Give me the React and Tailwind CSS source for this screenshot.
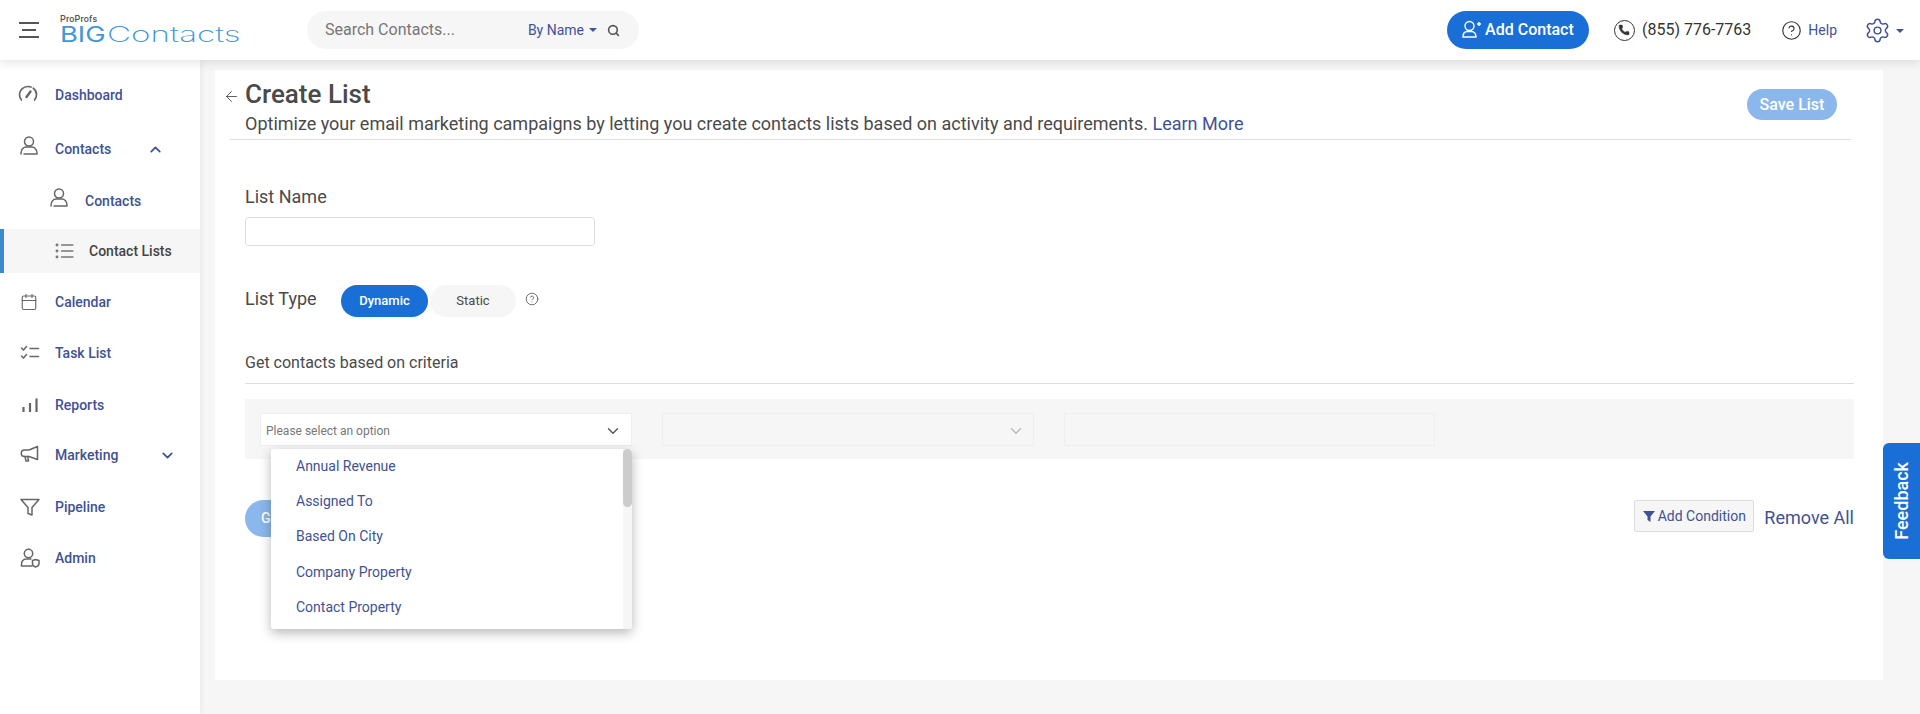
import React from "react";
import { ChevronUp, ChevronDown, Search, Calendar, Settings, Phone, CircleHelp, ArrowLeft } from "lucide-react";

const Svg = ({ children, className = "w-5 h-5 text-[#666]", sw = 1.5, vb = "0 0 20 20" }) => (
  <svg viewBox={vb} fill="none" stroke="currentColor" strokeWidth={sw} strokeLinecap="round" strokeLinejoin="round" className={className}>
    {children}
  </svg>
);

const UserIcon = () => (
  <Svg className="w-[18px] h-[19px] text-[#666] -mt-[7px]" vb="0 0 18 19">
    <circle cx="9" cy="5.500" r="4.500" />
    <path d="M1 18v-1c0-3.500 2.500-6 5-6h6c2.500 0 5 2.500 5 6v1H4" />
  </Svg>
);
const GaugeIcon = () => (
  <Svg className="w-[20px] h-[20px] text-[#666] -ml-[2px] -mt-[2px]" sw={1.7}>
    <path d="M3.500 16C2 14.500 1.500 12.500 1.500 10.500 1.500 6 5.300 2.500 10 2.500s8.500 3.500 8.500 8c0 2-.7 4-2 5.500" strokeDasharray="22 2.500" />
    <path d="M8.500 13l4-5.500" strokeWidth="2.400" />
  </Svg>
);
const ListIcon = () => (
  <Svg className="w-5 h-5 text-[#777] -ml-[1px]" sw={1.3}>
    <circle cx="3" cy="4" r=".8" fill="currentColor" />
    <circle cx="3" cy="10" r=".8" fill="currentColor" />
    <circle cx="3" cy="16" r=".8" fill="currentColor" />
    <path d="M7.500 4H19M7.500 10H19M7.500 16H19" />
  </Svg>
);
const TasksIcon = () => (
  <Svg>
    <path d="M1.500 5l2 2 3-3.500M1.500 13l2 2 3-3.500" />
    <path d="M10 5.500h8.500M10 13.500h8.500" />
  </Svg>
);
const BarsIcon = () => (
  <Svg sw={2.200}>
    <path d="M3.500 17v-5M10 17V8M16.500 17V3.500" strokeLinecap="butt" />
  </Svg>
);
const MegaIcon = () => (
  <Svg className="w-5 h-5 text-[#666] -mt-[3px]">
    <path d="M17.500 2.500v13L9 12.500H4.500a3 3 0 0 1 0-6.500H9z" />
    <path d="M5 12.500l1 4.500h2.500l-.8-4.500" />
  </Svg>
);
const FunnelIcon = () => (
  <Svg>
    <path d="M1 2.500h18l-7 8V18l-4-1.500v-6z" />
  </Svg>
);
const AdminIcon = () => (
  <Svg>
    <circle cx="8.500" cy="5.500" r="4.200" />
    <path d="M1.500 18v-2c0-2.500 2-5 4.500-5h5M1.500 18H12" />
    <path d="M12.500 12.500l3-1 3.500 1v3c0 2-1.500 3-3.500 3.500-1.700-.5-3-1.500-3-3.500z" />
  </Svg>
);

const Caret = ({ className = "" }) => (
  <span className={`inline-block w-0 h-0 border-x-[4px] border-x-transparent border-t-[4px] border-t-[#3f5293] ${className}`} />
);

const Item = ({ icon, label, trailing, className = "" }) => (
  <div className={`flex items-center h-[26px] pl-5 text-[14px] font-medium text-[#3f5293] ${className}`}>
    <span className="w-[35px] shrink-0">{icon}</span>
    <span>{label}</span>
    {trailing}
  </div>
);

export default function App() {
  const options = ["Annual Revenue", "Assigned To", "Based On City", "Company Property", "Contact Property"];
  return (
    <div className="relative h-[714px] w-[1920px] overflow-hidden flex flex-col bg-[#f6f6f6] font-['Roboto',sans-serif] text-[#4a4a4a]">
      <header className="relative z-10 h-[60px] shrink-0 bg-white shadow-[0_2px_10px_rgba(0,0,0,0.12)] flex items-center pl-[19px] pr-4">
        <div className="flex flex-col gap-[5px] w-[20px]">
          <span className="h-[2px] w-[20px] bg-[#555]" />
          <span className="h-[2px] w-[14px] ml-[3px] bg-[#555]" />
          <span className="h-[2px] w-[20px] bg-[#555]" />
        </div>
        <div className="ml-[21px] w-[180px] h-[32px] flex flex-col justify-center mt-[-1px]">
          <span className="text-[9px] leading-[9px] text-[#555] tracking-[0.2px] font-medium">ProProfs</span>
          <span className="flex items-baseline text-[21px] leading-[21px] text-[#3f97d8] font-['Inter',sans-serif] whitespace-nowrap">
            <span className="font-normal origin-left scale-x-[1.3] w-[47px]">BIG</span>
            <span className="font-extralight origin-left scale-x-[1.58]">Contacts</span>
          </span>
        </div>
        <div className="ml-[67px] w-[332px] h-[38px] rounded-full bg-[#f6f6f6] flex items-center pl-[18px] pr-[19px]">
          <span className="text-[16px] text-[#777] flex-1">Search Contacts...</span>
          <span className="text-[14px] text-[#3f5293]">By Name</span>
          <Caret className="ml-[5px]" />
          <Search size={13} strokeWidth={3} className="ml-[10px] text-[#555]" />
        </div>
        <div className="flex-1" />
        <button className="w-[142px] h-[38px] rounded-full bg-[#1a6fd6] text-white text-[16px] font-medium flex items-center justify-center gap-[3px]">
          <svg viewBox="0 0 20 18" fill="none" stroke="currentColor" strokeWidth="1.400" className="w-[20px] h-[18px] mb-[3px]">
            <circle cx="7.500" cy="6" r="4.500" />
            <path d="M1 17c0-3.500 2-5.500 4.500-5.500h4c2.500 0 4.500 2 4.500 5.500zM15 4h4M17 2v4" />
          </svg>
          Add Contact
        </button>
        <span className="ml-[25px] w-[21px] h-[21px] rounded-full border border-[#333] flex items-center justify-center">
          <Phone size={12} fill="#333" strokeWidth={1} className="text-[#333]" />
        </span>
        <span className="ml-[7px] text-[16px] text-[#333]">(855) 776-7763</span>
        <CircleHelp size={21} strokeWidth={1.300} className="ml-[30px] text-[#333]" />
        <span className="ml-[6px] text-[14px] text-[#3f5293]">Help</span>
        <Settings size={27} strokeWidth={1.300} className="ml-[27px] text-[#3f5293]" />
        <Caret className="ml-[5px] mt-[2px]" />
      </header>

      <div className="flex-1 flex min-h-0">
        <aside className="relative z-[5] w-[200px] shrink-0 bg-white shadow-[2px_0_6px_rgba(0,0,0,0.05)] pt-[22px] flex flex-col">
          <Item icon={<GaugeIcon />} label="Dashboard" />
          <Item
            className="mt-[28px]"
            icon={<UserIcon />}
            label="Contacts"
            trailing={<ChevronUp size={17} strokeWidth={2.500} className="ml-[36px]" />}
          />
          <Item className="mt-[26px] pl-[50px]" icon={<UserIcon />} label="Contacts" />
          <div className="mt-[15px] h-[44px] bg-[#f6f6f6] border-l-[4px] border-[#3b8ad0] flex items-center pl-[51px] text-[14px] font-medium text-[#444]">
            <span className="w-[34px] shrink-0"><ListIcon /></span>
            Contact Lists
          </div>
          <Item className="mt-[16px]" icon={<Calendar size={18} strokeWidth={1.500} className="text-[#666]" />} label="Calendar" />
          <Item className="mt-[25px]" icon={<TasksIcon />} label="Task List" />
          <Item className="mt-[26px]" icon={<BarsIcon />} label="Reports" />
          <Item
            className="mt-[24px]"
            icon={<MegaIcon />}
            label="Marketing"
            trailing={<ChevronDown size={17} strokeWidth={2.500} className="ml-[41px]" />}
          />
          <Item className="mt-[26px]" icon={<FunnelIcon />} label="Pipeline" />
          <Item className="mt-[25px]" icon={<AdminIcon />} label="Admin" />
        </aside>

        <div className="flex-1 min-w-0 pt-[10px] pb-[34px] pl-[15px] pr-[37px]">
          <main className="relative h-full bg-white pl-[15px] pr-[32px]">
            <div className="border-b border-[#ddd] h-[70px] flex relative">
              <ArrowLeft size={17} strokeWidth={1.200} className="mt-[18px] -ml-[7px] text-[#444]" />
              <div className="ml-[5px] flex-1">
                <h1 className="text-[26px] leading-[28px] mt-[10px] font-medium">Create List</h1>
                <p className="text-[18px] leading-[22px] mt-[5px] whitespace-nowrap">
                  Optimize your email marketing campaigns by letting you create contacts lists based on activity and requirements.{" "}
                  <span className="text-[#3f5293]">Learn More</span>
                </p>
              </div>
              <button className="absolute right-[14px] top-[19px] w-[90px] h-[31px] rounded-full bg-[#8bb7ec] text-white text-[16px] font-medium">Save List</button>
            </div>

            <div className="pl-[15px] -mr-[3px]">
              <label className="block mt-[46px] text-[18px] leading-[22px]">List Name</label>
              <div className="mt-[9px] w-[350px] h-[29px] border border-[#ddd] rounded-[4px] bg-white" />

              <div className="mt-[39px] flex items-center h-[32px]">
                <span className="text-[18px] w-[96px] -mt-[6px]">List Type</span>
                <span className="w-[87px] h-[32px] rounded-full bg-[#1a6fd6] text-white text-[13px] font-medium flex items-center justify-center">Dynamic</span>
                <span className="ml-[2px] w-[86px] h-[32px] rounded-full bg-[#f6f6f6] text-[13px] flex items-center justify-center">Static</span>
                <CircleHelp size={14} strokeWidth={1.400} className="ml-[9px] -mt-[4px] text-[#555]" />
              </div>

              <div className="mt-[35px] h-[32px] border-b border-[#ddd] text-[16px] leading-[20px] pt-[1px]">Get contacts based on criteria</div>

              <div className="relative mt-[15px] h-[60px] bg-[#f6f6f6] pl-[15px] pt-[14px] flex gap-[30px]">
                <div className="w-[372px] h-[33px] bg-white border border-[#eee] flex items-center justify-between pl-[5px] pr-[9px] pt-[2px]">
                  <span className="text-[12px] text-[#777]">Please select an option</span>
                  <ChevronDown size={18} strokeWidth={1.800} className="text-[#555]" />
                </div>
                <div className="w-[372px] h-[33px] border border-[#eee] flex items-center justify-end pr-[8px] pt-[2px]">
                  <ChevronDown size={18} strokeWidth={1.800} className="text-[#bbb]" />
                </div>
                <div className="w-[371px] h-[33px] border border-[#eee]" />
                <div className="absolute z-20 left-[26px] top-[50px] w-[361px] h-[180px] bg-white rounded-[3px] shadow-[0_4px_12px_rgba(0,0,0,0.28)] overflow-hidden flex">
                  <ul className="flex-1 pl-[25px]">
                    {options.map((o) => (
                      <li key={o} className="h-[35.200px] flex items-center text-[14px] text-[#3f5293]">{o}</li>
                    ))}
                  </ul>
                  <div className="w-[9px] bg-[#f6f6f6]">
                    <div className="h-[58px] rounded-full bg-[#ccc]" />
                  </div>
                </div>
              </div>

              <div className="mt-[41px] flex items-start justify-between">
                <button className="w-[90px] h-[37px] rounded-full bg-[#8bb7ec] text-white text-[14px] font-medium text-left pl-[16px]">Get Count</button>
                <div className="flex items-center">
                  <button className="w-[120px] h-[32px] bg-[#f6f6f6] border border-[#ddd] rounded-[2px] text-[14px] text-[#3f5293] flex items-center justify-center gap-[3px]">
                    <svg viewBox="0 0 12 12" className="w-[12px] h-[12px]" fill="#3f5293"><path d="M0 1h12L7.500 6.500V12l-3-2V6.500z" /></svg>
                    Add Condition
                  </button>
                  <span className="ml-[10px] text-[18px] text-[#3f5293] mt-[2px]">Remove All</span>
                </div>
              </div>
            </div>
          </main>
        </div>
      </div>

      <div className="absolute z-30 right-0 top-[443px] w-[37px] h-[116px] bg-[#1a6fd6] rounded-l-[6px] flex items-center justify-center">
        <span className="text-white text-[18px] font-medium [writing-mode:vertical-rl] rotate-180">Feedback</span>
      </div>
    </div>
  );
}
